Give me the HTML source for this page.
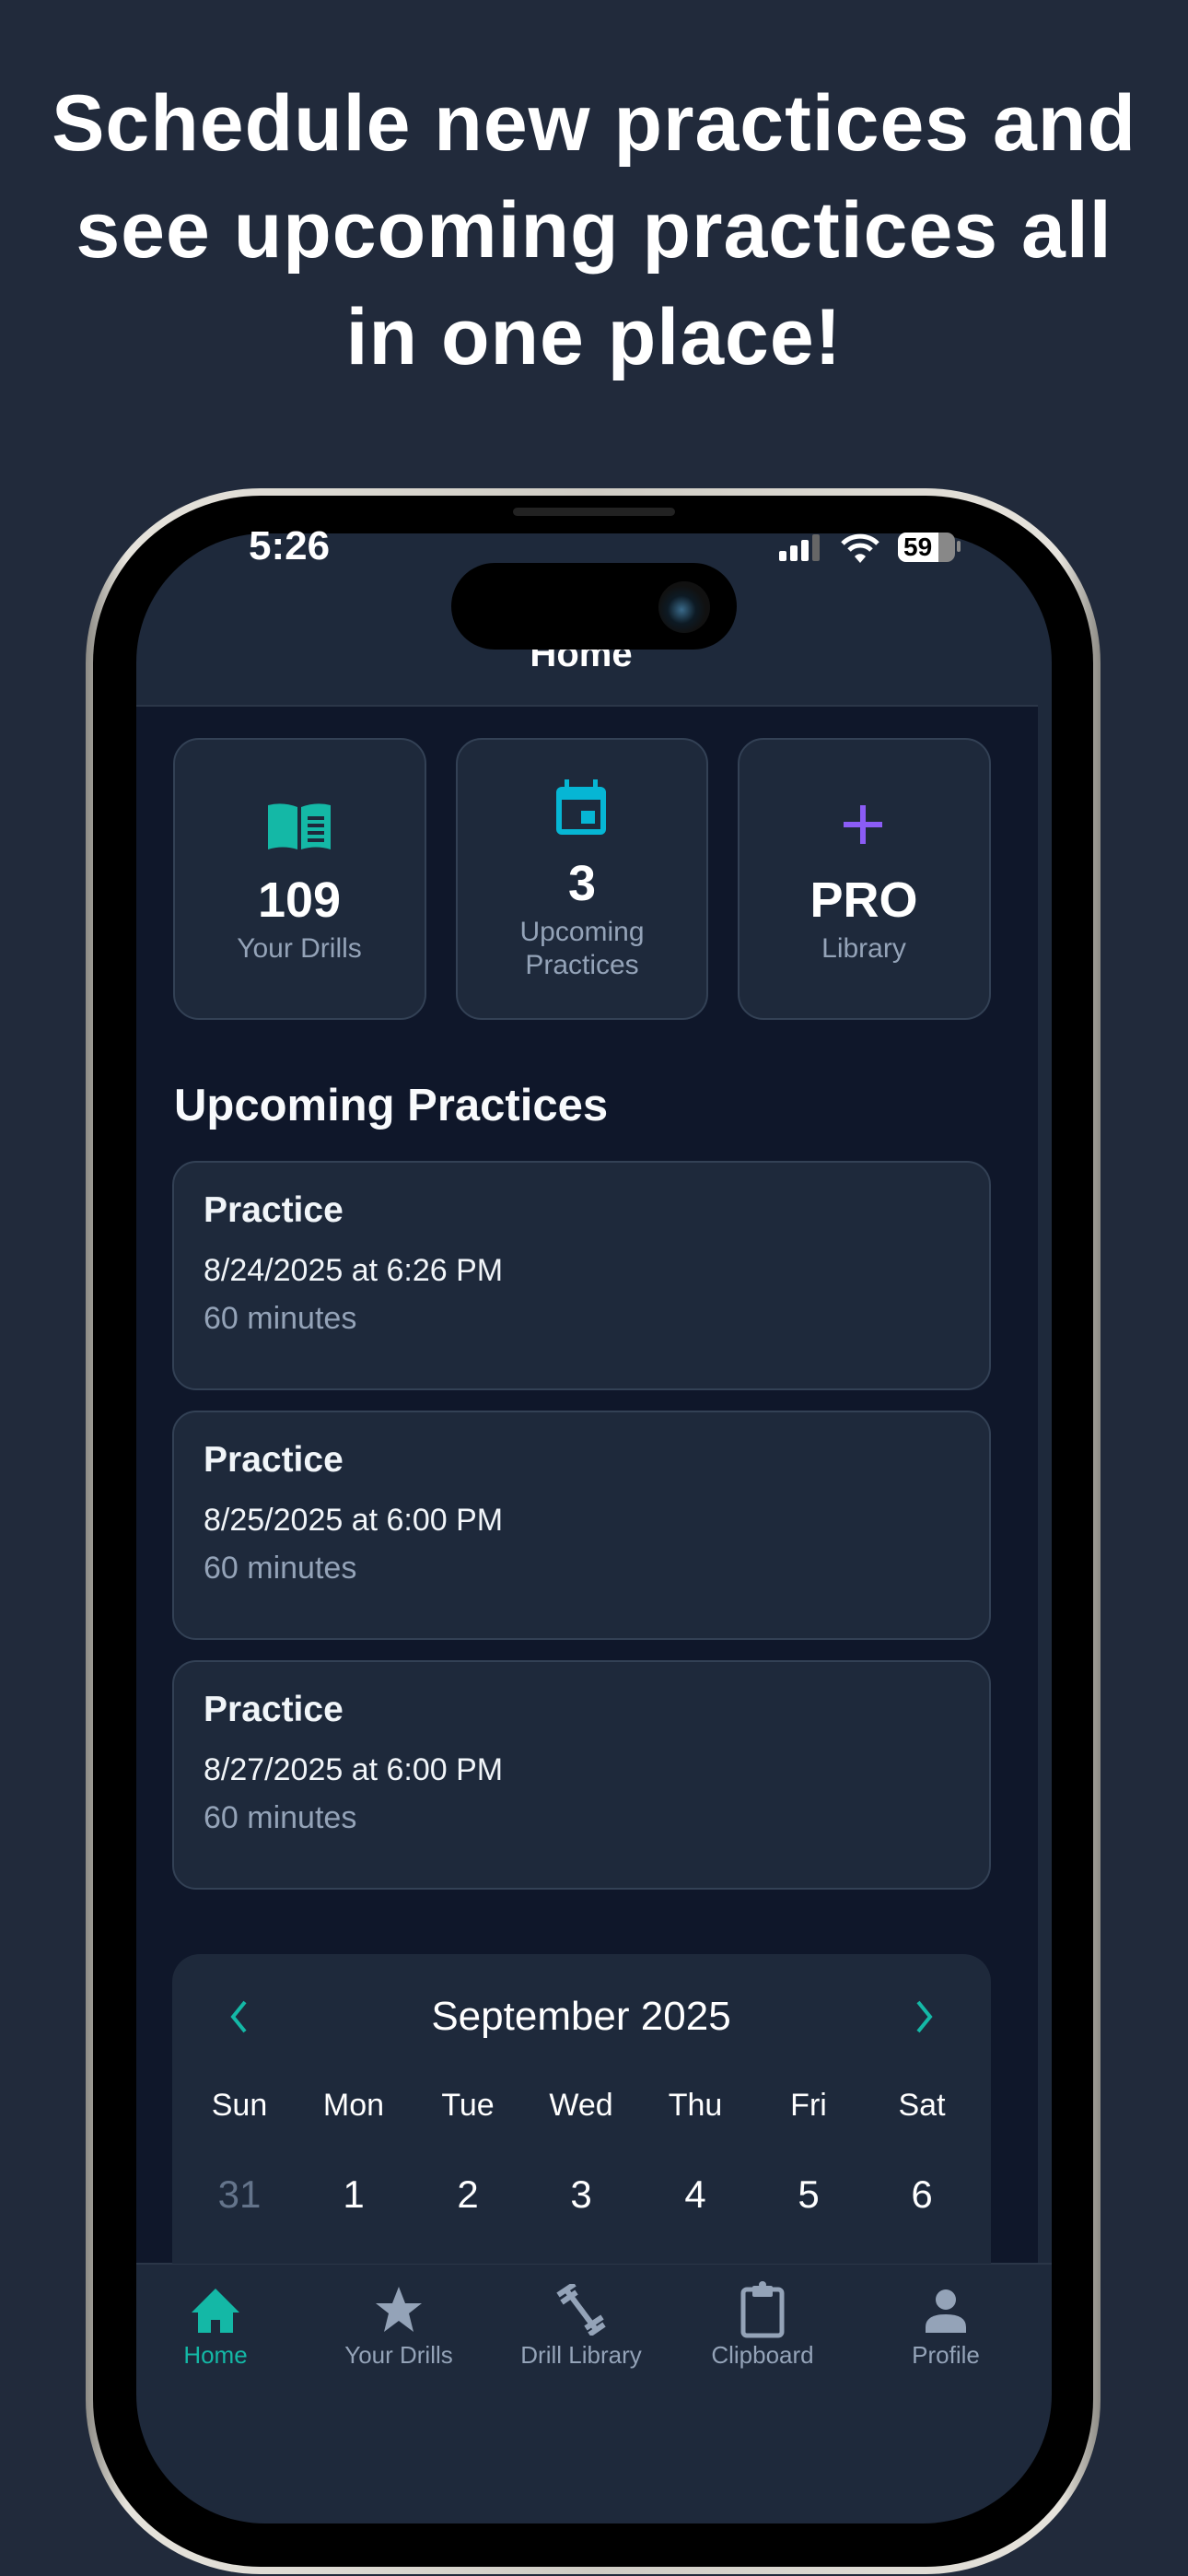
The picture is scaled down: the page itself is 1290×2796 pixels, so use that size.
<!DOCTYPE html>
<html><head><meta charset="utf-8"><style>
*{margin:0;padding:0;box-sizing:border-box}
body{width:1290px;height:2796px;background:#212a3b;position:relative;overflow:hidden;font-family:"Liberation Sans",sans-serif;color:#fff}
.a{position:absolute}
.h{left:0;width:1290px;text-align:center;font-weight:bold;font-size:86px;letter-spacing:1px;line-height:116px;top:76px;color:#fff;white-space:nowrap}
.c{text-align:center;transform:translateX(-50%)}
.card{background:#1e293b;border:2px solid #334155;border-radius:28px}
.pc{left:187px;width:889px;height:249px;background:#1e293b;border:2px solid #334155;border-radius:26px}
.pc .t{position:absolute;left:32px;top:30px;font-size:39px;font-weight:bold;color:#f1f5f9}
.pc .d{position:absolute;left:32px;top:98px;font-size:34px;color:#f1f5f9}
.pc .m{position:absolute;left:32px;top:150px;font-size:34px;color:#94a3b8}
.wd{top:2266px;font-size:34px;color:#fff}
.dt{top:2358px;font-size:42px;color:#fff;font-weight:300}
.tl{top:2541px;font-size:26px;color:#94a3b8}
</style></head><body>
<div class="a h">Schedule new practices and<br>see upcoming practices all<br>in one place!</div>

<div class="a" style="left:93px;top:530px;width:1102px;height:2264px;border-radius:190px;background:linear-gradient(90deg,#8d8b85,#e6e3dc 4%,#cfccc4 50%,#e6e3dc 96%,#8d8b85)"></div>
<div class="a" style="left:101px;top:538px;width:1086px;height:2248px;border-radius:182px;background:#000"></div>
<div class="a" style="left:148px;top:579px;width:994px;height:2160px;border-radius:140px;background:#1e293b;overflow:hidden">
  <div class="a" style="left:0;top:186px;width:979px;height:1692px;background:#0f172a;border-top:2px solid #2b3648"></div>
  <div class="a" style="left:0;top:1877px;width:994px;height:2px;background:#2b3648"></div>
</div>
<div class="a" style="left:557px;top:551px;width:176px;height:9px;border-radius:5px;background:#222"></div>

<div class="a" style="left:270px;top:568px;font-size:44px;font-weight:bold;color:#fff">5:26</div>
<svg class="a" style="left:846px;top:580px" width="50" height="30"><rect x="0" y="18" width="8" height="11" rx="2" fill="#fff"/><rect x="12" y="12" width="8" height="17" rx="2" fill="#fff"/><rect x="24" y="6" width="8" height="23" rx="2" fill="#fff"/><rect x="36" y="0" width="8" height="29" rx="2" fill="#666"/></svg>
<svg class="a" style="left:912px;top:578px" width="44" height="34" viewBox="0 0 44 34"><path d="M3 12a27 27 0 0 1 38 0" stroke="#fff" stroke-width="5" fill="none"/><path d="M10 19a17 17 0 0 1 24 0" stroke="#fff" stroke-width="5" fill="none"/><path d="M16 26l6 7 6-7a8 8 0 0 0-12 0z" fill="#fff"/></svg>
<div class="a" style="left:975px;top:578px;width:62px;height:32px;border-radius:9px;background:#888;overflow:hidden"><div style="width:44px;height:32px;background:#fff"></div><div class="a" style="left:6px;top:0;font-size:28px;font-weight:bold;color:#000">59</div></div>
<div class="a" style="left:1039px;top:587px;width:4px;height:12px;border-radius:2px;background:#888"></div>

<div class="a c" style="left:631px;top:688px;font-size:40px;font-weight:bold;color:#fff">Home</div>
<div class="a" style="left:490px;top:611px;width:310px;height:94px;border-radius:47px;background:#000"></div>
<div class="a" style="left:715px;top:631px;width:56px;height:56px;border-radius:28px;background:radial-gradient(circle at 45% 55%,#3a6a8a 0,#0d1a24 35%,#111 60%)"></div>

<div class="a card" style="left:188px;top:801px;width:275px;height:306px"></div>
<div class="a card" style="left:495px;top:801px;width:274px;height:306px"></div>
<div class="a card" style="left:801px;top:801px;width:275px;height:306px"></div>
<svg class="a" style="left:291px;top:872px" width="68" height="50" viewBox="0 0 68 50"><path d="M0 2q16-4 32 2v46q-16-5-32 0z" fill="#14b8a6"/><path d="M36 4q16-6 32-2v48q-16-5-32 0z" fill="#14b8a6"/><path d="M43 16h18M43 24h18M43 32h18M43 40h18" stroke="#1e293b" stroke-width="4"/></svg>
<svg class="a" style="left:604px;top:846px" width="54" height="60" viewBox="0 0 54 60"><rect x="9" y="0" width="5" height="10" fill="#06b6d4"/><rect x="40" y="0" width="5" height="10" fill="#06b6d4"/><rect x="0" y="8" width="54" height="52" rx="6" fill="#06b6d4"/><rect x="6" y="22" width="42" height="32" fill="#1e293b"/><rect x="27" y="34" width="15" height="14" fill="#06b6d4"/></svg>
<div class="a" style="left:934px;top:874px;width:6px;height:42px;background:#8b5cf6"></div>
<div class="a" style="left:916px;top:892px;width:42px;height:6px;background:#8b5cf6"></div>

<div class="a c" style="left:325px;top:946px;font-size:54px;font-weight:bold">109</div>
<div class="a c" style="left:325px;top:1013px;font-size:30px;color:#94a3b8">Your&nbsp;Drills</div>
<div class="a c" style="left:632px;top:928px;font-size:54px;font-weight:bold">3</div>
<div class="a c" style="left:632px;top:994px;font-size:30px;color:#94a3b8;line-height:36px">Upcoming<br>Practices</div>
<div class="a c" style="left:938px;top:946px;font-size:54px;font-weight:bold">PRO</div>
<div class="a c" style="left:938px;top:1013px;font-size:30px;color:#94a3b8">Library</div>

<div class="a" style="left:189px;top:1172px;font-size:49px;font-weight:bold;color:#f8fafc">Upcoming Practices</div>

<div class="a pc" style="top:1260px"><div class="t">Practice</div><div class="d">8/24/2025 at 6:26 PM</div><div class="m">60 minutes</div></div>
<div class="a pc" style="top:1531px"><div class="t">Practice</div><div class="d">8/25/2025 at 6:00 PM</div><div class="m">60 minutes</div></div>
<div class="a pc" style="top:1802px"><div class="t">Practice</div><div class="d">8/27/2025 at 6:00 PM</div><div class="m">60 minutes</div></div>

<div class="a" style="left:187px;top:2121px;width:889px;height:336px;background:#1e293b;border-radius:30px 30px 0 0"></div>
<svg class="a" style="left:248px;top:2170px" width="24" height="38"><path d="M18 3L5 19l13 16" stroke="#14b8a6" stroke-width="4" fill="none"/></svg>
<svg class="a" style="left:991px;top:2170px" width="24" height="38"><path d="M6 3l13 16L6 35" stroke="#14b8a6" stroke-width="4" fill="none"/></svg>
<div class="a c" style="left:631px;top:2164px;font-size:44px;font-weight:300">September 2025</div>
<div class="a c wd" style="left:260px">Sun</div><div class="a c wd" style="left:384px">Mon</div><div class="a c wd" style="left:508px">Tue</div><div class="a c wd" style="left:631px">Wed</div><div class="a c wd" style="left:755px">Thu</div><div class="a c wd" style="left:878px">Fri</div><div class="a c wd" style="left:1001px">Sat</div>
<div class="a c dt" style="left:260px;color:#64748b">31</div><div class="a c dt" style="left:384px">1</div><div class="a c dt" style="left:508px">2</div><div class="a c dt" style="left:631px">3</div><div class="a c dt" style="left:755px">4</div><div class="a c dt" style="left:878px">5</div><div class="a c dt" style="left:1001px">6</div>

<svg class="a" style="left:208px;top:2484px" width="52" height="50" viewBox="0 0 52 50"><path d="M26 0L0 26h7v22h14V34h10v14h14V26h7z" fill="#14b8a6"/></svg>
<svg class="a" style="left:407px;top:2482px" width="52" height="50" viewBox="0 0 52 50"><path d="M26 0l7 18h18l-14 11 5 20-16-12-16 12 5-20L1 18h18z" fill="#94a3b8"/></svg>
<svg class="a" style="left:604px;top:2479px" width="54" height="56" viewBox="0 0 54 56"><path d="M12 8l30 40" stroke="#94a3b8" stroke-width="6"/><path d="M2 12l18-12M6 20l16-11M32 48l18-12M36 55l16-11" stroke="#94a3b8" stroke-width="6"/></svg>
<svg class="a" style="left:804px;top:2476px" width="48" height="62" viewBox="0 0 48 62"><rect x="3" y="9" width="42" height="50" rx="4" stroke="#94a3b8" stroke-width="5" fill="none"/><rect x="13" y="5" width="22" height="12" rx="2" fill="#94a3b8"/><circle cx="24" cy="4" r="4" fill="#94a3b8"/></svg>
<svg class="a" style="left:1005px;top:2484px" width="44" height="50" viewBox="0 0 44 50"><circle cx="22" cy="12" r="11" fill="#94a3b8"/><path d="M0 48v-6q0-14 22-14t22 14v6z" fill="#94a3b8"/></svg>
<div class="a c tl" style="left:234px;color:#14b8a6">Home</div>
<div class="a c tl" style="left:433px;white-space:nowrap">Your Drills</div>
<div class="a c tl" style="left:631px;white-space:nowrap">Drill Library</div>
<div class="a c tl" style="left:828px">Clipboard</div>
<div class="a c tl" style="left:1027px">Profile</div>
</body></html>
